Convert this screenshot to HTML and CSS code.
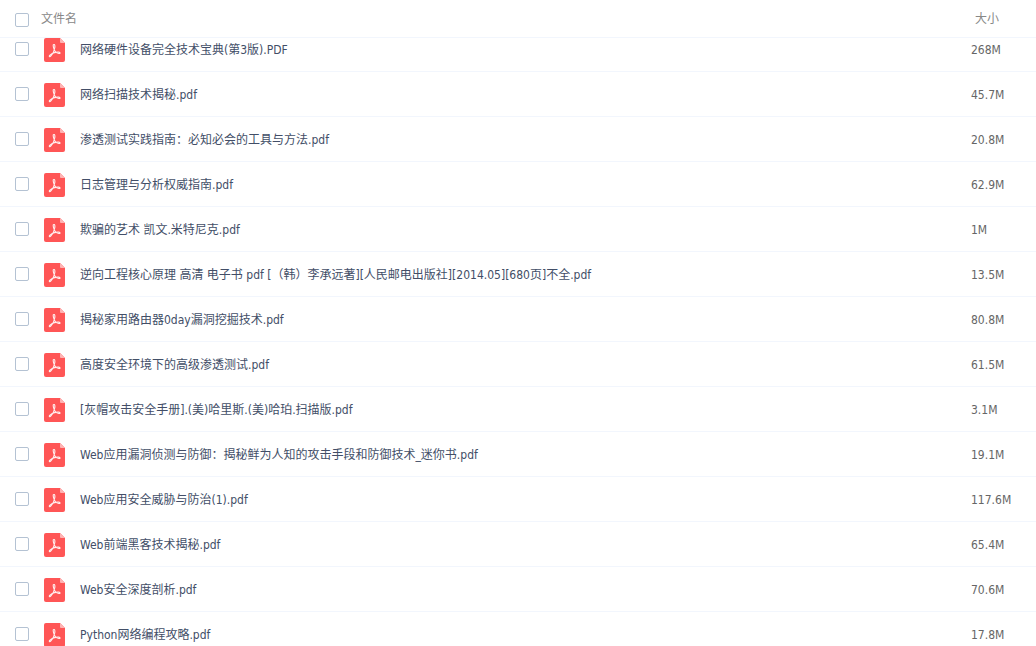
FILE: index.html
```
<!DOCTYPE html>
<html lang="zh-CN">
<head>
    <meta charset="UTF-8">
    <meta name="viewport" content="width=device-width, initial-scale=1.0">
    <title>文件列表</title>
    <link rel="stylesheet" href="styles.css">
</head>
<body>
    <svg class="sprite" aria-hidden="true">
        <symbol id="pdf" viewBox="0 0 21 24">
            <path fill="#ff5656" d="M2 0h14l5 5v17a2 2 0 0 1-2 2H2a2 2 0 0 1-2-2V2a2 2 0 0 1 2-2z"/>
            <path fill="#ffb4b4" d="M16 0l5 5h-4a1 1 0 0 1-1-1z"/>
            <path fill="none" stroke="#fff0f0" stroke-width="1.1" stroke-linecap="round" stroke-linejoin="round" d="M9.300 6.700c1.500-.7 1.800.8 1.500 3C10.300 13.200 8.600 16.200 6.700 18.200c-1 1-2 .2-1-.9 1.900-1.800 5.800-3.300 9-3.200 1.800.1 1.800 1.700.1 1.400-2.200-.4-4.600-2.800-5.300-6-.2-.9-.5-2.200-.2-2.800z"/>
        </symbol>
    </svg>
    <div class="file-list">
        <table>
            <thead>
                <tr>
                    <th class="check"><input type="checkbox" aria-label="全选"></th>
                    <th class="name">文件名</th>
                    <th class="size">大小</th>
                </tr>
            </thead>
            <tbody id="files"></tbody>
        </table>
    </div>
    <script>
        const files=[
            {name:'网络硬件设备完全技术宝典(第3版).PDF', size:'268M'},
            {name:'网络扫描技术揭秘.pdf', size:'45.7M'},
            {name:'渗透测试实践指南：必知必会的工具与方法.pdf', size:'20.8M'},
            {name:'日志管理与分析权威指南.pdf', size:'62.9M'},
            {name:'欺骗的艺术 凯文.米特尼克.pdf', size:'1M'},
            {name:'逆向工程核心原理 高清 电子书 pdf [（韩）李承远著][人民邮电出版社][2014.05][680页]不全.pdf', size:'13.5M'},
            {name:'揭秘家用路由器0day漏洞挖掘技术.pdf', size:'80.8M'},
            {name:'高度安全环境下的高级渗透测试.pdf', size:'61.5M'},
            {name:'[灰帽攻击安全手册].(美)哈里斯.(美)哈珀.扫描版.pdf', size:'3.1M'},
            {name:'Web应用漏洞侦测与防御：揭秘鲜为人知的攻击手段和防御技术_迷你书.pdf', size:'19.1M'},
            {name:'Web应用安全威胁与防治(1).pdf', size:'117.6M'},
            {name:'Web前端黑客技术揭秘.pdf', size:'65.4M'},
            {name:'Web安全深度剖析.pdf', size:'70.6M'},
            {name:'Python网络编程攻略.pdf', size:'17.8M'},
        ]
        document.getElementById('files').innerHTML=files.map((file,i)=>`
            <tr>
                <td class="check"><input type="checkbox" id="file${i}"></td>
                <td class="name">
                    <label for="file${i}"><svg class="icon" aria-hidden="true"><use href="#pdf"/></svg>${file.name}</label>
                </td>
                <td class="size">${file.size}</td>
            </tr>`).join('');
    </script>
</body>
</html>
```
FILE: styles.css
```
*{
    box-sizing: border-box;
}
body{
    margin: 0;
    background-color: #fff;
    color: #424e67;
    font-family: "DejaVu Sans Condensed", "Noto Sans CJK SC", sans-serif;
    font-size: 12px;
    line-height: 24px;
    text-spacing-trim: space-all;
}
.sprite{
    display: none;
}
.file-list{
    height: 100vh;
    overflow-y: auto;
    scrollbar-width: none;
}
table{
    width: 100%;
    table-layout: fixed;
    border-collapse: separate;
    border-spacing: 0;
}
th{
    position: sticky;
    top: 0;
    padding: 7px 0 6px;
    background-color: #fff;
    border-bottom: 1px solid #f2f6fd;
    color: #888;
    font-weight: normal;
    text-align: left;
    vertical-align: top;
}
td{
    padding: 11px 0 9px;
    border-bottom: 1px solid #f2f6fd;
    vertical-align: top;
}
/* first row sits right under the header */
tbody tr:first-child td{
    padding-top: 0;
}
.check{
    width: 41px;
}
.check input{
    margin: 4px 0 0 15px;
}
th.check input{
    margin-top: 6px;
}
.size{
    width: 65px;
}
th.size{
    padding-left: 4px;
}
td.size{
    color: #666;
}
.name label{
    display: flex;
    align-items: center;
    gap: 15px;
    padding-left: 3px;
    white-space: nowrap;
}
.icon{
    flex: none;
    width: 21px;
    height: 24px;
}
input{
    appearance: none;
    display: block;
    width: 14px;
    height: 14px;
    border: 1px solid #b4c2d3;
    border-radius: 2px;
    background-color: #fff;
}
input:checked{
    background-color: #3b8cff;
}
```
